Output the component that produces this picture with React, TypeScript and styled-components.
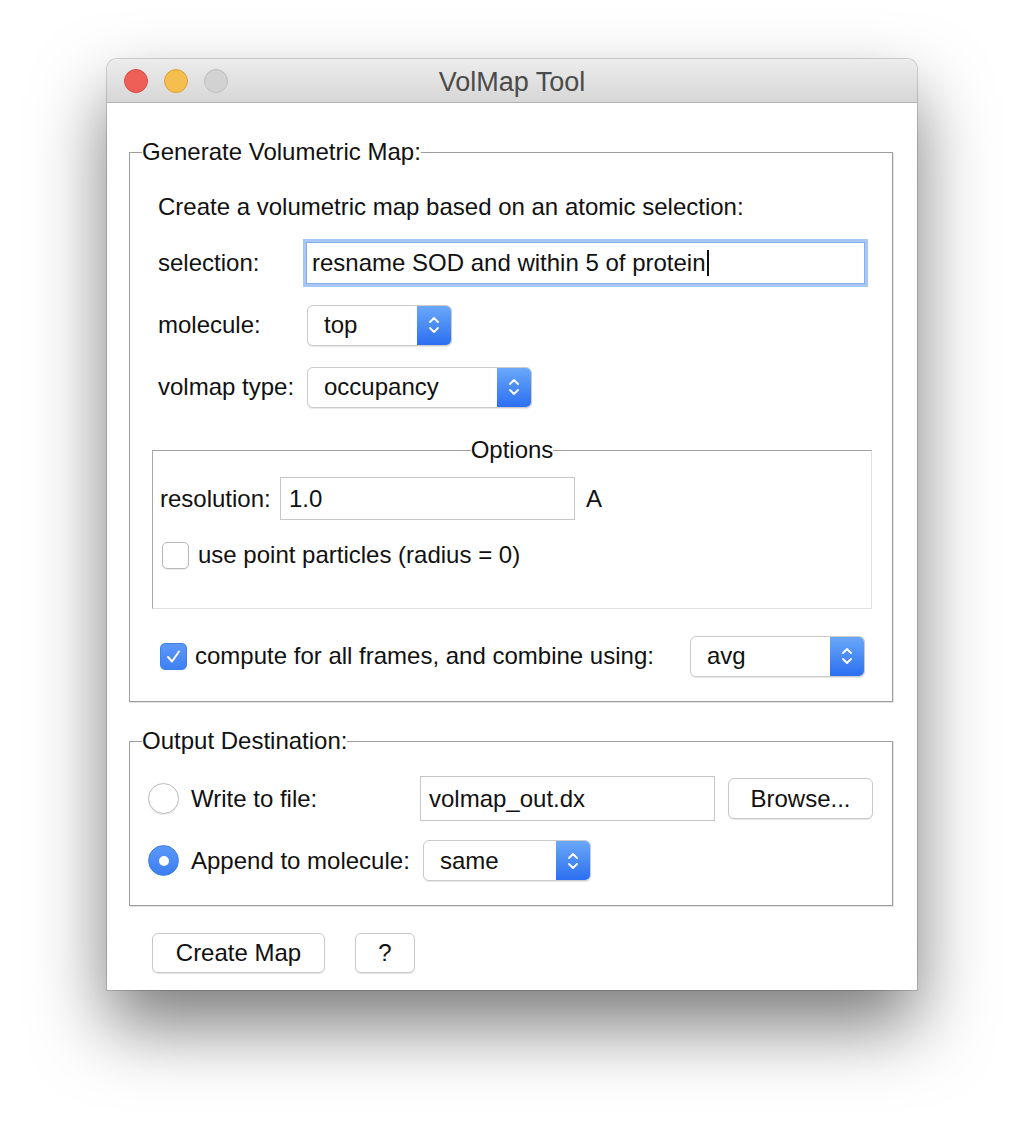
import React from 'react';
import styled, { createGlobalStyle } from 'styled-components';

const Global = createGlobalStyle`
  html, body { margin: 0; padding: 0; background: #ffffff; }
  body { font-family: "Liberation Sans", Arial, Helvetica, sans-serif; color: #111111; }
  * { box-sizing: border-box; }
`;

const Page = styled.div`
  width: 1024px;
  padding: 59px 107px 156px;
`;

const Window = styled.div`
  width: 810px;
  height: 931px;
  background: #ffffff;
  border-radius: 10px 10px 0 0;
  box-shadow: 0 0 0 1px rgba(0, 0, 0, 0.16), 0 36px 72px rgba(0, 0, 0, 0.52);
  display: flex;
  flex-direction: column;
`;

const TitleBar = styled.div`
  height: 44px;
  flex: none;
  display: grid;
  grid-template-columns: 1fr auto 1fr;
  align-items: center;
  padding: 0 17px;
  border-radius: 10px 10px 0 0;
  background: linear-gradient(#ececec, #d7d7d7);
  border-bottom: 1px solid #b3b3b3;
`;

const Lights = styled.div`
  display: flex;
  gap: 16px;
`;

const Light = styled.span<{ $fill: string; $edge: string }>`
  width: 24px;
  height: 24px;
  border-radius: 50%;
  background: ${p => p.$fill};
  border: 1px solid ${p => p.$edge};
`;

const Title = styled.div`
  font-size: 27px;
  color: #4b4b4b;
  line-height: 30px;
  padding-top: 3px;
`;

const Body = styled.div`
  flex: 1;
  display: flex;
  flex-direction: column;
  padding: 37px 24px 17px 22px;
`;

const Group = styled.fieldset<{ $padL: number; $top?: number }>`
  margin: ${p => p.$top ?? 0}px 0 0 0;
  padding: 0 20px 24px ${p => p.$padL}px;
  min-width: 0;
  border: 1px solid #9d9d9d;
  box-shadow: 1px 1px 0 #e3e3e3;
  display: flex;
  flex-direction: column;
`;

const Legend = styled.legend<{ $shift: number }>`
  padding: 0;
  margin-left: ${p => p.$shift}px;
  font-size: 24px;
  line-height: 24px;
  color: #111;
`;

const OptionsBox = styled.fieldset`
  margin: 30px 0 0 0;
  padding: 0 7px 39px 7px;
  min-width: 0;
  border: 1px solid;
  border-color: #9f9f9f #e2e2e2 #e2e2e2 #a9a9a9;
  display: flex;
  flex-direction: column;
`;

const CenterLegend = styled.legend`
  padding: 0;
  margin: 0 auto;
  font-size: 24px;
  line-height: 24px;
  color: #111;
`;

const Intro = styled.div`
  margin-top: 31px;
  padding-left: 6px;
  font-size: 24px;
  line-height: 24px;
`;

const Row = styled.div<{ $top: number; $h: number; $padL?: number }>`
  margin-top: ${p => p.$top}px;
  height: ${p => p.$h}px;
  padding-left: ${p => p.$padL ?? 0}px;
  display: flex;
  align-items: center;
  font-size: 24px;
`;

const Label = styled.span<{ $w?: number }>`
  font-size: 24px;
  line-height: 26px;
  white-space: nowrap;
  flex: none;
  ${p => (p.$w ? `width: ${p.$w}px;` : '')}
`;

const Entry = styled.div<{ $w?: number; $h: number; $focus?: boolean }>`
  ${p => (p.$w ? `width: ${p.$w}px; flex: none;` : 'flex: 1;')}
  height: ${p => p.$h}px;
  display: flex;
  align-items: center;
  padding-left: ${p => (p.$focus ? 5 : 8)}px;
  font-size: 24px;
  background: #fff;
  border: 1px solid ${p => (p.$focus ? '#86aee9' : '#c6c6c6')};
  box-shadow: ${p => (p.$focus ? '0 0 0 3px #a8c7f4' : 'none')};
  white-space: nowrap;
`;

const Caret = styled.span`
  display: inline-block;
  width: 2px;
  height: 26px;
  margin-left: 1px;
  background: #111;
`;

const Popup = styled.div<{ $w: number; $ml?: number }>`
  width: ${p => p.$w}px;
  height: 41px;
  flex: none;
  margin-left: ${p => p.$ml ?? 0}px;
  display: flex;
  border: 1px solid #cbcbcb;
  border-radius: 6px;
  overflow: hidden;
  background: #fff;
  box-shadow: 0 1px 1px rgba(0, 0, 0, 0.1);
`;

const PopupValue = styled.span`
  flex: 1;
  display: flex;
  align-items: center;
  padding-left: 16px;
  font-size: 24px;
`;

const PopupArrows = styled.span`
  width: 34px;
  flex: none;
  display: flex;
  align-items: center;
  justify-content: center;
  background: linear-gradient(#6aa8f9, #2c6ff1);
`;

const Check = styled.span<{ $on?: boolean }>`
  width: 27px;
  height: 27px;
  flex: none;
  border-radius: 5px;
  display: flex;
  align-items: center;
  justify-content: center;
  background: ${p => (p.$on ? 'linear-gradient(#5b98f7, #3f80f3)' : '#fff')};
  border: 1px solid ${p => (p.$on ? '#3f7fe8' : '#b9b9b9')};
  box-shadow: ${p => (p.$on ? 'none' : '0 1px 1px rgba(0,0,0,0.08)')};
`;

const Radio = styled.span<{ $on?: boolean }>`
  width: 31px;
  height: 31px;
  flex: none;
  border-radius: 50%;
  display: flex;
  align-items: center;
  justify-content: center;
  background: ${p => (p.$on ? 'linear-gradient(#5b98f7, #3c7ef3)' : '#fff')};
  border: 1px solid ${p => (p.$on ? '#3f7fe8' : '#bdbdbd')};
  box-shadow: ${p => (p.$on ? 'none' : '0 1px 1px rgba(0,0,0,0.08)')};
`;

const Dot = styled.span`
  width: 10px;
  height: 10px;
  border-radius: 50%;
  background: #fff;
`;

const Spacer = styled.span<{ $w?: number }>`
  ${p => (p.$w ? `flex: none; width: ${p.$w}px;` : 'flex: 1;')}
`;

const Button = styled.div<{ $w: number; $h?: number; $ml?: number }>`
  width: ${p => p.$w}px;
  height: ${p => p.$h ?? 40}px;
  flex: none;
  margin-left: ${p => p.$ml ?? 0}px;
  display: flex;
  align-items: center;
  justify-content: center;
  font-size: 24px;
  background: #fff;
  border: 1px solid #c9c9c9;
  border-radius: 6px;
  box-shadow: 0 1px 1px rgba(0, 0, 0, 0.1);
`;

const ButtonRow = styled.div`
  margin-top: 27px;
  padding-left: 23px;
  display: flex;
  gap: 30px;
`;

const Chevrons = () => (
  <svg width="12" height="22" viewBox="0 0 12 22" fill="none">
    <path d="M2 8 L6 4 L10 8" stroke="#fff" strokeWidth="1.8" strokeLinecap="round" strokeLinejoin="round" />
    <path d="M2 14 L6 18 L10 14" stroke="#fff" strokeWidth="1.8" strokeLinecap="round" strokeLinejoin="round" />
  </svg>
);

const CheckMark = () => (
  <svg width="19" height="19" viewBox="0 0 19 19" fill="none">
    <path d="M4 10 L8 14.5 L15 4.5" stroke="#fff" strokeWidth="2" strokeLinecap="round" strokeLinejoin="round" />
  </svg>
);

const PopupButton = ({ value, w, ml }: { value: string; w: number; ml?: number }) => (
  <Popup $w={w} $ml={ml}>
    <PopupValue>{value}</PopupValue>
    <PopupArrows>
      <Chevrons />
    </PopupArrows>
  </Popup>
);

export default function App() {
  return (
    <Page>
      <Global />
      <Window>
        <TitleBar>
          <Lights>
            <Light $fill="#ee5f58" $edge="#d94b42" />
            <Light $fill="#f6bd4f" $edge="#dfa136" />
            <Light $fill="#d2d2d2" $edge="#bfbfbf" />
          </Lights>
          <Title>VolMap Tool</Title>
          <span />
        </TitleBar>
        <Body>
          <Group $padL={22}>
            <Legend $shift={-10}>Generate Volumetric Map:</Legend>
            <Intro>Create a volumetric map based on an atomic selection:</Intro>
            <Row $top={23} $h={42} $padL={6}>
              <Label $w={148}>selection:</Label>
              <Entry $h={42} $focus>
                resname SOD and within 5 of protein
                <Caret />
              </Entry>
              <Spacer $w={7} />
            </Row>
            <Row $top={20} $h={42} $padL={6}>
              <Label $w={149}>molecule:</Label>
              <PopupButton value="top" w={145} />
            </Row>
            <Row $top={20} $h={42} $padL={6}>
              <Label $w={149}>volmap type:</Label>
              <PopupButton value="occupancy" w={225} />
            </Row>
            <OptionsBox>
              <CenterLegend>Options</CenterLegend>
              <Row $top={15} $h={43}>
                <Label $w={120}>resolution:</Label>
                <Entry $w={295} $h={43}>1.0</Entry>
                <Label style={{ marginLeft: 11 }}>A</Label>
              </Row>
              <Row $top={21} $h={28} $padL={2}>
                <Check />
                <Label style={{ marginLeft: 9 }}>use point particles (radius = 0)</Label>
              </Row>
            </OptionsBox>
            <Row $top={26} $h={42} $padL={8}>
              <Check $on>
                <CheckMark />
              </Check>
              <Label style={{ marginLeft: 8 }}>compute for all frames, and combine using:</Label>
              <Spacer />
              <PopupButton value="avg" w={175} />
              <Spacer $w={7} />
            </Row>
          </Group>
          <Group $padL={18} $top={27}>
            <Legend $shift={-6}>Output Destination:</Legend>
            <Row $top={23} $h={45}>
              <Radio />
              <Label $w={241} style={{ paddingLeft: 12 }}>Write to file:</Label>
              <Entry $w={295} $h={45}>volmap_out.dx</Entry>
              <Button $w={145} $h={41} $ml={13}>Browse...</Button>
            </Row>
            <Row $top={19} $h={41}>
              <Radio $on>
                <Dot />
              </Radio>
              <Label $w={244} style={{ paddingLeft: 12 }}>Append to molecule:</Label>
              <PopupButton value="same" w={168} />
            </Row>
          </Group>
          <ButtonRow>
            <Button $w={173}>Create Map</Button>
            <Button $w={60}>?</Button>
          </ButtonRow>
        </Body>
      </Window>
    </Page>
  );
}
